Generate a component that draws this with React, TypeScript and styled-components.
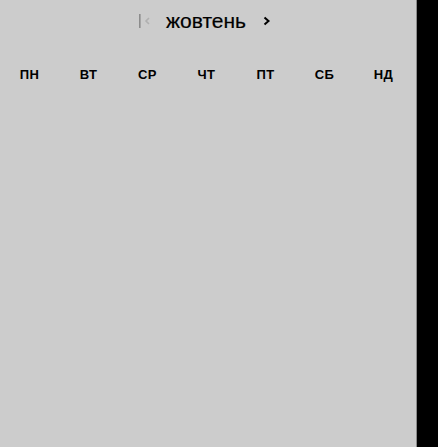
import React from "react";
import styled, { createGlobalStyle } from "styled-components";

const Global = createGlobalStyle`
  html, body { margin: 0; padding: 0; background: #000; }
  body { font-family: "Liberation Sans", Arial, sans-serif; }
`;

const Panel = styled.div`
  width: 416px;
  height: 447px;
  background: #cccccc;
  border-right: 1px solid #8a8a8a;
  display: flex;
  flex-direction: column;
`;

const Header = styled.div`
  height: 42px;
  display: flex;
  align-items: center;
  justify-content: center;
  padding-right: 6px;
`;

const NavButton = styled.button<{ $disabled?: boolean }>`
  border: none;
  background: none;
  padding: 0;
  margin: 0;
  display: flex;
  align-items: center;
  color: ${(p) => (p.$disabled ? "#9a9a9a" : "#000")};
`;

const Title = styled.div`
  font-size: 21px;
  color: #000;
  margin: 0 17px 0 15px;
  line-height: 1;
  padding-bottom: 2px;
  -webkit-text-stroke: 0.2px #000;
`;

const Weekdays = styled.div`
  display: grid;
  grid-template-columns: repeat(7, 1fr);
  margin-top: 25px;
  padding-right: 3px;
`;

const Weekday = styled.div`
  text-align: center;
  font-size: 13px;
  font-weight: 700;
  color: #000;
  letter-spacing: 0.4px;
`;

const days = ["ПН", "ВТ", "СР", "ЧТ", "ПТ", "СБ", "НД"];

export default function App() {
  return (
    <>
      <Global />
      <Panel>
        <Header>
          <NavButton $disabled aria-label="first">
            <svg width="12" height="14" viewBox="0 0 12 14">
              <rect x="0" y="0" width="1.6" height="14" fill="#8c8c8c" />
              <path d="M10 4 L7 7 L10 10" stroke="#b0b0b0" strokeWidth="1.6" fill="none" />
            </svg>
          </NavButton>
          <Title>жовтень</Title>
          <NavButton aria-label="next">
            <svg width="8" height="10" viewBox="0 0 8 10">
              <path d="M1.5 1.5 L5.5 5 L1.5 8.5" stroke="#000" strokeWidth="2" fill="none" />
            </svg>
          </NavButton>
        </Header>
        <Weekdays>
          {days.map((d) => (
            <Weekday key={d}>{d}</Weekday>
          ))}
        </Weekdays>
      </Panel>
    </>
  );
}
